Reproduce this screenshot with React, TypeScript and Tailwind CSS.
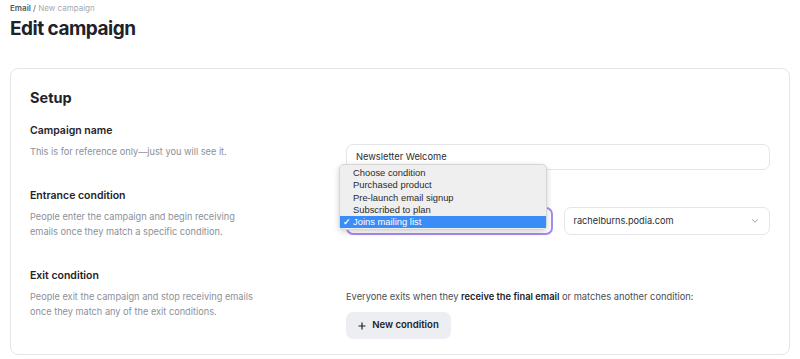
import React from "react";

const items = [
  "Choose condition",
  "Purchased product",
  "Pre-launch email signup",
  "Subscribed to plan",
  "Joins mailing list",
];

export default function App() {
  return (
    <div
      className="w-[800px] h-[359px] bg-white overflow-hidden px-[10px] text-[#1f2328]"
      style={{ fontFamily: "Inter, 'Noto Sans', sans-serif" }}
    >
      <div className="pt-[3px] text-[8px] leading-[10px]">
        <span className="font-semibold text-[#55595f]">Email</span>
        <span className="text-[#55595f]"> / </span>
        <span className="text-[#a6aab0]">New campaign</span>
      </div>
      <h1 className="mt-[4px] text-[19px] leading-[24px] font-bold tracking-[-0.5px] text-[#1d2329]">
        Edit campaign
      </h1>

      <div className="mt-[27px] h-[287px] border border-[#e3e5e8] rounded-[8px] px-[19px] pt-[19px]">
        <h2 className="text-[14.5px] leading-[20px] font-bold text-[#1d2329]">Setup</h2>

        {/* Campaign name */}
        <div className="mt-[16px] flex">
          <div className="w-[316px]">
            <div className="text-[10.5px] leading-[14px] font-semibold">Campaign name</div>
            <div className="mt-[6px] text-[9.2px] leading-[15px] text-[#8d9198]">
              This is for reference only—just you will see it.
            </div>
          </div>
          <div className="flex-1 mt-[20px]">
            <div className="h-[26px] border border-[#e3e5e8] rounded-[7px] flex items-center px-[9px] text-[9.3px] text-[#2a2e33]">
              Newsletter Welcome
            </div>
          </div>
        </div>

        {/* Entrance condition */}
        <div className="mt-[19px] flex">
          <div className="w-[316px]">
            <div className="text-[10.5px] leading-[14px] font-semibold">Entrance condition</div>
            <div className="mt-[6px] text-[9.2px] leading-[15px] text-[#8d9198]">
              People enter the campaign and begin receiving
              <br />
              emails once they match a specific condition.
            </div>
          </div>
          <div className="flex-1 mt-[18px] grid grid-cols-2 gap-[11px]">
            <div className="relative h-[28px]">
              <div className="h-[28px] rounded-[7px] border-2 border-[#a58cf0] bg-white" />
              <div className="absolute left-[-7px] top-[-43px] w-[208px] h-[66px] bg-[#efefef] rounded-[5px] border border-[#d6d6d6] shadow-[0_2px_6px_rgba(0,0,0,0.18)] pt-[2px] z-10">
                {items.map((it, i) => (
                  <div
                    key={it}
                    className={
                      i === 4
                        ? "h-[12.25px] flex items-center bg-[#3a8cf6] text-white text-[9.4px] leading-[12px]"
                        : "h-[12.25px] flex items-center text-[#2b2b2b] text-[9.4px] leading-[12px]"
                    }
                    style={{ fontFamily: "'Liberation Sans', Arial, sans-serif" }}
                  >
                    <span className="w-[13px] pl-[3px] text-[9px] font-bold">{i === 4 ? "✓" : ""}</span>
                    <span>{it}</span>
                  </div>
                ))}
              </div>
            </div>
            <div className="h-[28px] border border-[#e3e5e8] rounded-[7px] flex items-center justify-between pl-[9px] pr-[10px] text-[9.2px] text-[#2a2e33]">
              <span>rachelburns.podia.com</span>
              <svg width="8" height="6" viewBox="0 0 8 6" fill="none">
                <path d="M1.5 1.8 L4 4.2 L6.5 1.8" stroke="#9aa0a6" strokeWidth="1" strokeLinecap="round" strokeLinejoin="round" />
              </svg>
            </div>
          </div>
        </div>

        {/* Exit condition */}
        <div className="mt-[30px] flex">
          <div className="w-[316px]">
            <div className="text-[10.5px] leading-[14px] font-semibold">Exit condition</div>
            <div className="mt-[6px] text-[9.2px] leading-[15px] text-[#8d9198]">
              People exit the campaign and stop receiving emails
              <br />
              once they match any of the exit conditions.
            </div>
          </div>
          <div className="flex-1 mt-[20px]">
            <div className="text-[9.3px] leading-[15px] text-[#4a4f55]">
              Everyone exits when they <span className="font-semibold text-[#1d2329]">receive the final email</span> or
              matches another condition:
            </div>
            <button className="mt-[8px] h-[27px] w-[105px] rounded-[7px] bg-[#eceef1] flex items-center justify-center gap-[6px] text-[9.6px] font-semibold text-[#1d2329]">
              <svg width="8" height="8" viewBox="0 0 8 8">
                <path d="M4 0.5 V7.5 M0.5 4 H7.5" stroke="#1d2329" strokeWidth="1.2" />
              </svg>
              New condition
            </button>
          </div>
        </div>
      </div>
    </div>
  );
}
